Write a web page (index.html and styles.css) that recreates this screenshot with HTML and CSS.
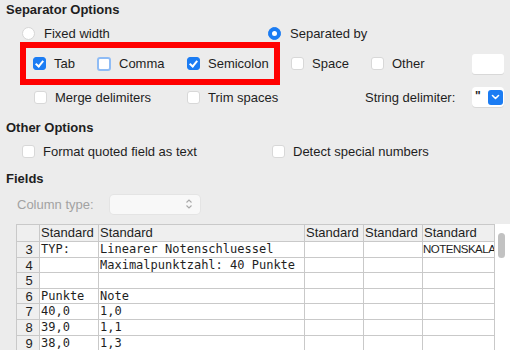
FILE: index.html
```html
<!DOCTYPE html>
<html lang="en">
<head>
    <meta charset="UTF-8">
    <title>Text Import</title>
    <link rel="stylesheet" href="styles.css">
</head>
<body>
    <div class="heading first">Separator Options</div>

    <div class="row radio-row">
        <label class="opt w-fixed"><span class="radio"></span>Fixed width</label>
        <label class="opt"><span class="radio on"></span>Separated by</label>
    </div>

    <div class="row sep-row">
        <div class="highlight">
            <label class="opt w-tab"><span class="check on"></span>Tab</label>
            <label class="opt w-comma"><span class="check focus"></span>Comma</label>
            <label class="opt"><span class="check on"></span>Semicolon</label>
        </div>
        <label class="opt w-space"><span class="check"></span>Space</label>
        <label class="opt w-other"><span class="check"></span>Other</label>
        <div class="entry"></div>
    </div>

    <div class="row merge-row">
        <label class="opt w-merge"><span class="check"></span>Merge delimiters</label>
        <label class="opt w-trim"><span class="check"></span>Trim spaces</label>
        <span class="w-delim">String delimiter:</span>
        <div class="dropdown">
            <span class="quote">"</span>
            <span class="drop-btn">
                <svg width="9" height="6" viewBox="0 0 9 6"><polyline points="1.5,1.5 4.5,4.5 7.5,1.5" fill="none" stroke="#fff" stroke-width="1.6" stroke-linecap="round" stroke-linejoin="round"/></svg>
            </span>
        </div>
    </div>

    <div class="heading other">Other Options</div>

    <div class="row format-row">
        <label class="opt w-format"><span class="check"></span>Format quoted field as text</label>
        <label class="opt"><span class="check"></span>Detect special numbers</label>
    </div>

    <div class="heading fields">Fields</div>

    <div class="row coltype-row">
        <span class="muted">Column type:</span>
        <div class="combo">
            <svg width="8" height="12" viewBox="0 0 8 12"><polyline points="1.5,4.5 4,2 6.5,4.5" fill="none" stroke="#a8a8a8" stroke-width="1.1"/><polyline points="1.5,7.5 4,10 6.5,7.5" fill="none" stroke="#a8a8a8" stroke-width="1.1"/></svg>
        </div>
    </div>

    <div class="preview">
        <div class="grid">
            <div class="hd"></div><div class="hd">Standard</div><div class="hd">Standard</div><div class="hd">Standard</div><div class="hd">Standard</div><div class="hd">Standard</div>

            <div class="num">3</div><div class="cell">TYP:</div><div class="cell">Linearer Notenschluessel</div><div class="cell"></div><div class="cell"></div><div class="cell sans">NOTENSKALA</div>
            <div class="num">4</div><div class="cell"></div><div class="cell">Maximalpunktzahl: 40 Punkte</div><div class="cell"></div><div class="cell"></div><div class="cell"></div>
            <div class="num">5</div><div class="cell"></div><div class="cell"></div><div class="cell"></div><div class="cell"></div><div class="cell"></div>
            <div class="num">6</div><div class="cell">Punkte</div><div class="cell">Note</div><div class="cell"></div><div class="cell"></div><div class="cell"></div>
            <div class="num">7</div><div class="cell">40,0</div><div class="cell">1,0</div><div class="cell"></div><div class="cell"></div><div class="cell"></div>
            <div class="num">8</div><div class="cell">39,0</div><div class="cell">1,1</div><div class="cell"></div><div class="cell"></div><div class="cell"></div>
            <div class="num">9</div><div class="cell">38,0</div><div class="cell">1,3</div><div class="cell"></div><div class="cell"></div><div class="cell"></div>
        </div>
        <div class="scroll"><div class="thumb"></div></div>
    </div>
</body>
</html>
```
FILE: styles.css
```css
body {
    margin: 0;
    background-color: #ececec;
    font-family: 'Liberation Sans', Arial, sans-serif;
    font-size: 13px;
    color: #1e1e1e;
    overflow: hidden;
}

.heading {
    font-weight: bold;
    height: 20px;
    line-height: 20px;
    padding-left: 6px;
}

.heading.first {
    height: 24px;
}

.heading.other {
    margin-top: 10px;
}

.heading.fields {
    margin-top: 7px;
}

.row {
    display: flex;
    align-items: center;
}

.opt {
    display: flex;
    align-items: center;
    flex-shrink: 0;
}

/* radio buttons */
.radio {
    box-sizing: border-box;
    width: 13px;
    height: 13px;
    border-radius: 50%;
    background: #fff;
    border: 1px solid #d6d6d6;
    margin-right: 9px;
    display: flex;
    align-items: center;
    justify-content: center;
}

.radio.on {
    background: #1b7cf3;
    border-color: #1b7cf3;
}

.radio.on::after {
    content: "";
    width: 5px;
    height: 5px;
    border-radius: 50%;
    background: #fff;
}

/* checkboxes */
.check {
    box-sizing: border-box;
    width: 13px;
    height: 13px;
    border-radius: 3px;
    background: #fff;
    border: 1px solid #d8d8d8;
    margin-right: 8px;
    display: flex;
    align-items: center;
    justify-content: center;
}

.check.on {
    background: #1b7cf3;
    border-color: #1b7cf3;
}

.check.on::after {
    content: "";
    width: 3px;
    height: 6px;
    border: solid #fff;
    border-width: 0 2px 2px 0;
    transform: rotate(40deg);
    margin-top: -2px;
}

.check.focus {
    border: 2px solid #8fbcf5;
    width: 14px;
    height: 14px;
}

.radio-row {
    height: 18px;
    padding-left: 22px;
}

.w-fixed { width: 246px; }

.sep-row {
    height: 43px;
}

.highlight {
    box-sizing: border-box;
    display: flex;
    align-items: center;
    margin-left: 20px;
    width: 260px;
    height: 43px;
    border: 6px solid #ff0000;
    padding-left: 7px;
}

.w-tab { width: 64px; }
.w-comma { width: 90px; }
.w-space { width: 80px; margin-left: 11px; }
.w-other { width: 101px; }

.entry {
    width: 32px;
    height: 20px;
    background: #fff;
    border-radius: 3px;
    box-shadow: 0 1px 0 #d8d8d8;
}

.merge-row {
    height: 22px;
    margin-top: 1px;
    padding-left: 34px;
}

.w-merge { width: 153px; }
.w-trim { width: 178px; }
.w-delim { width: 107px; }

.dropdown {
    box-sizing: border-box;
    width: 32px;
    height: 20px;
    background: #fff;
    border-radius: 4px;
    box-shadow: 0 1px 0 #d8d8d8;
    display: flex;
    align-items: center;
    justify-content: space-between;
    padding: 0 1px 0 3px;
}

.quote {
    font-size: 12px;
    font-weight: bold;
    line-height: 12px;
    margin-top: -2px;
}

.drop-btn {
    width: 15px;
    height: 15px;
    border-radius: 3px;
    background: #1b7cf3;
    display: flex;
    align-items: center;
    justify-content: center;
}

.format-row {
    height: 22px;
    margin-top: 2px;
    padding-left: 22px;
}

.w-format { width: 250px; }

.coltype-row {
    height: 20px;
    margin-top: 5px;
    padding-left: 17px;
}

.muted {
    color: #a2a2a2;
    width: 93px;
}

.combo {
    box-sizing: border-box;
    width: 90px;
    height: 19px;
    background: #f8f8f8;
    border-radius: 4px;
    box-shadow: 0 0 0 1px #e4e4e4;
    display: flex;
    align-items: center;
    justify-content: flex-end;
    padding-right: 7px;
}

/* preview table */
.preview {
    display: flex;
    margin-top: 10px;
    margin-left: 16px;
    background: #fff;
    height: 130px;
}

.grid {
    display: grid;
    grid-template-columns: 22px 58px 205px 58px 58px 71px;
    grid-template-rows: 16px repeat(7, 14.6px);
    gap: 1px;
    padding: 1px;
    background: #c9c9c9;
    align-self: flex-start;
}

.hd {
    background: #efefef;
    line-height: 16px;
    padding-left: 1px;
    white-space: nowrap;
    overflow: hidden;
}

.num {
    background: #efefef;
    text-align: center;
    line-height: 15px;
    font-size: 13px;
    padding-left: 2px;
}

.cell {
    background: #fff;
    font-family: 'DejaVu Sans Mono', 'Liberation Mono', monospace;
    font-size: 12px;
    line-height: 15px;
    padding-left: 1px;
    white-space: nowrap;
    overflow: hidden;
}

.cell.sans {
    font-family: 'Liberation Sans', Arial, sans-serif;
    font-size: 11.5px;
    letter-spacing: -0.5px;
    padding-left: 0;
}

.scroll {
    flex: 1;
    position: relative;
}

.thumb {
    position: absolute;
    left: 3px;
    top: 9px;
    width: 7px;
    height: 25px;
    border-radius: 4px;
    background: #c2c2c2;
}
```
